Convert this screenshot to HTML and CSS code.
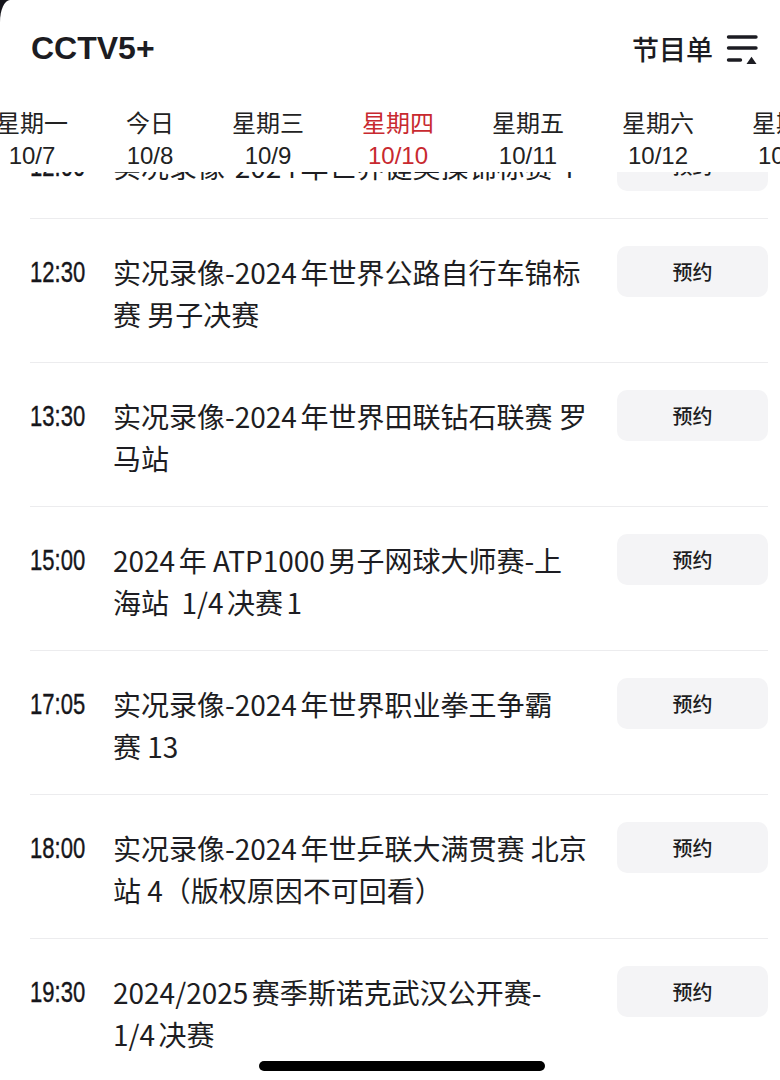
FILE: index.html
```html
<!DOCTYPE html>
<html lang="zh-CN">
<head>
  <meta charset="UTF-8" />
  <title>CCTV5+ 节目单</title>
  <link rel="stylesheet" href="styles.css">
</head>
<body>
  <div class="app">
    <div class="topbar">
      <h1>CCTV5+</h1>
      <div class="guide">
        <span>节目单</span>
        <svg class="guide-icon" width="32" height="32" viewBox="0 0 32 32">
          <path d="M2.5 4H30M2.5 15H30M2.5 27H14.5" stroke="#1c1c22" stroke-width="3.4" stroke-linecap="round" fill="none"/>
          <path d="M20.5 31L25.5 23.8L30.5 31Z" fill="#1c1c22"/>
        </svg>
      </div>
    </div>

    <div class="days">
      <div class="day"><span class="day-name">星期一</span><span class="day-date">10/7</span></div>
      <div class="day"><span class="day-name">今日</span><span class="day-date">10/8</span></div>
      <div class="day"><span class="day-name">星期三</span><span class="day-date">10/9</span></div>
      <div class="day active"><span class="day-name">星期四</span><span class="day-date">10/10</span></div>
      <div class="day"><span class="day-name">星期五</span><span class="day-date">10/11</span></div>
      <div class="day"><span class="day-name">星期六</span><span class="day-date">10/12</span></div>
      <div class="day"><span class="day-name">星期日</span><span class="day-date">10/13</span></div>
    </div>

    <div class="schedule">
      <div class="program-list">
        <div class="program">
          <span class="time"><span>12:00</span></span>
          <span class="title">实况录像-2024年世界健美操锦标赛 4</span>
          <button class="remind-btn">预约</button>
        </div>
        <div class="program">
          <span class="time"><span>12:30</span></span>
          <span class="title">实况录像-2024年世界公路自行车锦标<br>赛 男子决赛</span>
          <button class="remind-btn">预约</button>
        </div>
        <div class="program">
          <span class="time"><span>13:30</span></span>
          <span class="title">实况录像-2024年世界田联钻石联赛 罗<br>马站</span>
          <button class="remind-btn">预约</button>
        </div>
        <div class="program">
          <span class="time"><span>15:00</span></span>
          <span class="title">2024年 ATP1000男子网球大师赛-上<br>海站&nbsp; 1/4决赛1</span>
          <button class="remind-btn">预约</button>
        </div>
        <div class="program">
          <span class="time"><span>17:05</span></span>
          <span class="title">实况录像-2024年世界职业拳王争霸<br>赛 13</span>
          <button class="remind-btn">预约</button>
        </div>
        <div class="program">
          <span class="time"><span>18:00</span></span>
          <span class="title">实况录像-2024年世乒联大满贯赛 北京<br>站 4（版权原因不可回看）</span>
          <button class="remind-btn">预约</button>
        </div>
        <div class="program">
          <span class="time"><span>19:30</span></span>
          <span class="title">2024/2025赛季斯诺克武汉公开赛-<br>1/4决赛</span>
          <button class="remind-btn">预约</button>
        </div>
      </div>
    </div>

    <div class="home-bar"></div>
  </div>
</body>
</html>
```

FILE: styles.css
```css
body {
  margin: 0;
  padding: 0;
  background: #15151b;
  font-family: "Noto Sans CJK SC", "Noto Sans", sans-serif;
  color: #1d1d22;
}

.app {
  position: relative;
  height: 1080px;
  background: #fff;
  border-top-left-radius: 10px 22px;
  overflow: hidden;
  display: flex;
  flex-direction: column;
}

.topbar {
  height: 96px;
  padding: 0 22px 0 31px;
  display: flex;
  justify-content: space-between;
  align-items: center;
  flex-shrink: 0;
}

.topbar h1 {
  margin: 0;
  font-family: "Liberation Sans", Arial, sans-serif;
  font-size: 32px;
  font-weight: 700;
  color: #1c1c22;
}

.guide {
  display: flex;
  align-items: center;
  gap: 13px;
  font-size: 27px;
  font-weight: 500;
  color: #1c1c22;
}

.guide-icon {
  display: block;
  margin-top: 2px;
}

.days {
  display: flex;
  gap: 58px;
  padding-top: 10px;
  margin-left: -4px;
  flex-shrink: 0;
  white-space: nowrap;
  position: relative;
  z-index: 2;
  background: #fff;
}

.day {
  display: flex;
  flex-direction: column;
  align-items: center;
  color: #222;
}

.day-name {
  font-size: 24px;
  line-height: 32px;
}

.day-date {
  margin-top: 2px;
  font-family: "Liberation Sans", Arial, sans-serif;
  font-size: 24px;
  line-height: 32px;
}

.day.active {
  color: #c8292f;
}

.schedule {
  flex: 1;
  overflow: hidden;
}

/* list is scrolled a little: first row sits under the day tabs */
.program-list {
  margin-top: -59px;
}

.program {
  display: flex;
  align-items: flex-start;
  margin: 0 12px 0 30px;
  padding: 27px 0;
  border-bottom: 1px solid #ececee;
}

.time {
  flex-shrink: 0;
  width: 57px;
  margin-top: 5px;
  margin-right: 26px;
  font-family: "Liberation Sans", Arial, sans-serif;
  font-size: 29px;
  line-height: 42px;
  color: #16161b;
  white-space: nowrap;
}

/* narrow digits, like the app's condensed clock face */
.time span {
  display: inline-block;
  transform: scaleX(0.76);
  transform-origin: left center;
  -webkit-text-stroke: 0.4px #16161b;
}

.title {
  flex: 1;
  margin-top: 5px;
  font-size: 28px;
  line-height: 42px;
  color: #1d1d22;
  white-space: nowrap;
  text-autospace: normal;
}

.remind-btn {
  flex-shrink: 0;
  width: 151px;
  height: 51px;
  border: none;
  border-radius: 10px;
  background: #f4f4f6;
  font-family: "Noto Sans CJK SC", sans-serif;
  font-size: 20px;
  font-weight: 500;
  color: #1d1d22;
}

.home-bar {
  position: absolute;
  left: 259px;
  bottom: 9px;
  width: 286px;
  height: 10px;
  border-radius: 5px;
  background: #000;
}
```
